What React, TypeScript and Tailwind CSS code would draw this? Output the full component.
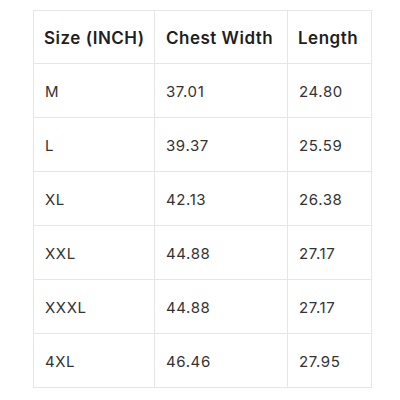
import React from "react";

const rows = [
  ["M", "37.01", "24.80"],
  ["L", "39.37", "25.59"],
  ["XL", "42.13", "26.38"],
  ["XXL", "44.88", "27.17"],
  ["XXXL", "44.88", "27.17"],
  ["4XL", "46.46", "27.95"],
];

export default function App() {
  return (
    <div className="w-[400px] h-[400px] bg-white pt-[10px] pl-[33px] font-['Inter',sans-serif] text-[#333]">
      <table className="border-collapse table-fixed w-[338px]">
        <colgroup>
          <col className="w-[121px]" />
          <col className="w-[133px]" />
          <col className="w-[84px]" />
        </colgroup>
        <thead>
          <tr className="h-[53px]">
            <th className="border border-[#e6e6e6] text-left pl-[10px] pt-[3px] text-[17px] font-semibold tracking-[0.5px] text-[#1f1f1f]">Size (INCH)</th>
            <th className="border border-[#e6e6e6] text-left pl-[11px] pt-[3px] text-[17px] font-semibold tracking-[0.5px] text-[#1f1f1f]">Chest Width</th>
            <th className="border border-[#e6e6e6] text-left pl-[10px] pt-[3px] text-[17px] font-semibold tracking-[0.5px] text-[#1f1f1f]">Length</th>
          </tr>
        </thead>
        <tbody>
          {rows.map((r) => (
            <tr key={r[0] + r[1]} className="h-[54px]">
              {r.map((c, i) => (
                <td key={i} className="border border-[#e6e6e6] pl-[11px] pt-[3px] text-[15px] tracking-[0.6px]">
                  {c}
                </td>
              ))}
            </tr>
          ))}
        </tbody>
      </table>
    </div>
  );
}
